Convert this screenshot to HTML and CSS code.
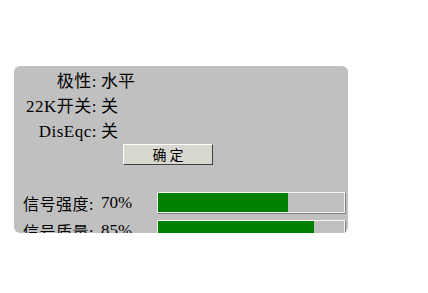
FILE: index.html
```html
<!DOCTYPE html>
<html>
<head>
<meta charset="utf-8">
<link rel="stylesheet" href="styles.css">
</head>
<body>
<div class="panel">
  <div class="settings">
    <div class="label">极性:</div><div class="value">水平</div>
    <div class="label">22K开关:</div><div class="value">关</div>
    <div class="label">DisEqc:</div><div class="value">关</div>
  </div>
  <div class="btn-row"><button class="btn">确 定</button></div>
  <div class="signals">
    <div class="sig-row">
      <span class="sig-label">信号强度:</span><span class="sig-val">70%</span>
      <div class="bar"><div class="fill" style="width:70%"></div></div>
    </div>
    <div class="sig-row">
      <span class="sig-label">信号质量:</span><span class="sig-val">85%</span>
      <div class="bar"><div class="fill" style="width:84%"></div></div>
    </div>
  </div>
</div>
</body>
</html>
```
FILE: styles.css
```css
html, body {
  margin: 0;
  padding: 0;
  background: #ffffff;
}
body {
  font-family: "Liberation Serif", "Noto Sans CJK SC", serif;
  font-size: 16px;
  color: #000;
}
.panel {
  margin: 66px 0 0 14px;
  width: 334px;
  height: 167px;
  background: #c0c0c0;
  border-radius: 6px;
  overflow: hidden;
  box-sizing: border-box;
  padding-top: 3px;
}
.settings {
  display: grid;
  grid-template-columns: 83px auto;
  column-gap: 4px;
  line-height: 25px;
  font-size: 17px;
}
.label {
  text-align: right;
  white-space: nowrap;
  letter-spacing: 0.5px;
}
.value {
  white-space: nowrap;
}
.btn-row {
  padding-left: 109px;
  height: 21px;
}
.btn {
  width: 90px;
  height: 21px;
  padding: 0;
  margin: 0;
  background: #d8d8d0;
  border: 1px solid;
  border-color: #ffffff #404040 #404040 #ffffff;
  font-family: "Noto Sans CJK SC", sans-serif;
  font-size: 14px;
  line-height: 17px;
  color: #000;
  display: block;
}
.signals {
  margin-top: 27px;
  display: flex;
  flex-direction: column;
  gap: 7px;
}
.sig-row {
  display: flex;
  align-items: center;
  height: 21px;
  padding-left: 9px;
  font-size: 16px;
}
.sig-label {
  width: 78px;
  white-space: nowrap;
  letter-spacing: 0.5px;
}
.sig-val {
  width: 56px;
  white-space: nowrap;
  font-size: 17px;
}
.bar {
  width: 186px;
  height: 19px;
  border: 1px solid #f4f4f4;
  box-shadow: 1px 1px 0 #808080;
  background: #c0c0c0;
}
.fill {
  height: 100%;
  background: #008000;
}
```
